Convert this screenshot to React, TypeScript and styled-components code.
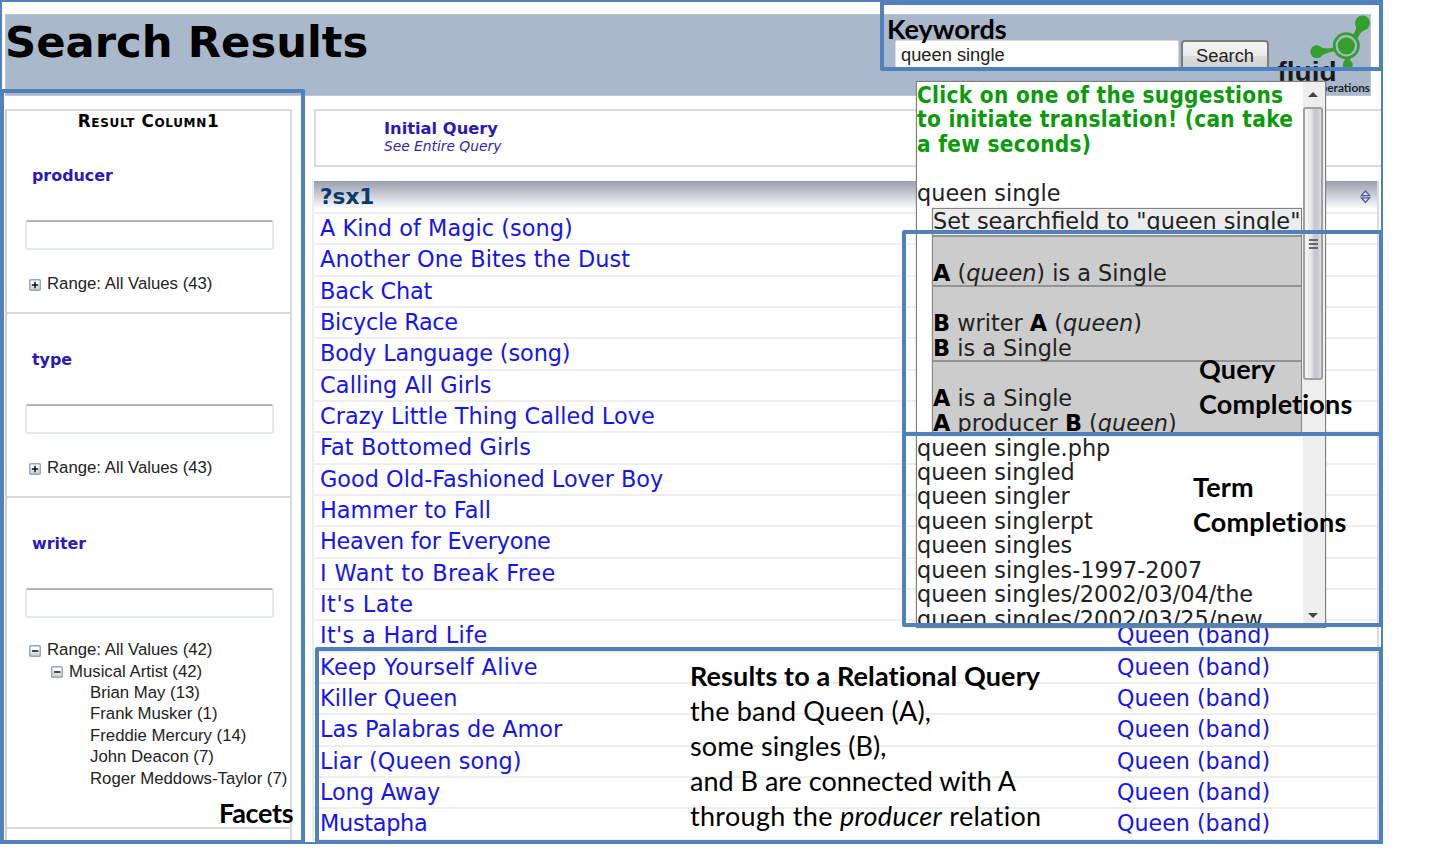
import React from 'react';
import styled, { createGlobalStyle } from 'styled-components';

const accent = '#4f81bd';
const verdana = '"DejaVu Sans", Verdana, sans-serif';
const arial = '"Liberation Sans", Arial, sans-serif';

const GlobalStyle = createGlobalStyle`
  * { box-sizing: border-box; }
  body { margin: 0; background: #fff; font-family: ${verdana}; color: #111; overflow: hidden; }
`;

const Shell = styled.div`
  position: relative;
  width: 1383px;
  height: 844px;
  border: 2px solid ${accent};
  padding: 12px 0 0 3px;
  overflow: hidden;
`;

const Banner = styled.header`
  display: flex;
  align-items: flex-start;
  width: 1366px;
  height: 82px;
  background: #a9b9cb;
  border: 1px solid #b9c6d4;
`;

const Title = styled.h1`
  flex: 1;
  margin: 0 0 0 -1px;
  font-size: 43.3px;
  line-height: 54px;
  font-weight: bold;
  color: #000;
  white-space: nowrap;
`;

const SearchForm = styled.form`
  display: flex;
  gap: 2px;
  padding-top: 25px;
`;

const SearchField = styled.div`
  width: 284px;
  height: 29px;
  padding-left: 5px;
  background: #fff;
  border: 1px solid #d5dce4;
  border-radius: 2px;
  font: 18.3px/27px ${arial};
  color: #222;
`;

const SearchButton = styled.button`
  width: 88px;
  height: 31px;
  padding: 0;
  border: 2px solid #7c7c7c;
  border-radius: 4px;
  background: linear-gradient(#f4f4f4, #ebebeb 50%, #dcdcdc 52%, #cfcfcf);
  font: 18.3px/27px ${arial};
  color: #222;
`;

const LogoSlot = styled.div`
  flex: none;
  width: 101px;
  height: 80px;
  svg { display: block; }
`;

const Columns = styled.div`
  display: flex;
  align-items: flex-start;
  padding-top: 13px;
`;

const Sidebar = styled.aside`
  flex: none;
  width: 287px;
  height: 760px;
  border: 2px solid #dadada;
  border-left-color: #cfcfcf;
`;

const SidebarTitle = styled.div`
  height: 19px;
  font-size: 16.8px;
  line-height: 21px;
  font-weight: bold;
  font-variant: small-caps;
  text-align: center;
  color: #000;
  letter-spacing: 0.65px;
`;

const FacetSection = styled.section<{ $height: number }>`
  height: ${p => p.$height}px;
  padding: 34px 0 0 18px;
  border-bottom: 2px solid #dadada;
`;

const FacetName = styled.h2`
  margin: 0 0 0 7px;
  font-size: 15.9px;
  line-height: 24px;
  font-weight: bold;
  color: #2a1ab8;
`;

const FacetInput = styled.div`
  width: 249px;
  height: 30px;
  margin-top: 32px;
  border: 2px solid #e3e9ef;
  border-top-color: #b4b5bb;
  border-radius: 3px;
`;

const Tree = styled.ul<{ $gap: number }>`
  list-style: none;
  margin: ${p => p.$gap}px 0 0 4px;
  padding: 0;
`;

const TreeRow = styled.li<{ $level: number }>`
  display: flex;
  align-items: center;
  gap: 6px;
  height: 21.4px;
  padding-left: ${p => [0, 22, 61][p.$level]}px;
  font: 16.75px/21px ${arial};
  color: #222;
  white-space: nowrap;
  svg { flex: none; margin-top: 2px; }
`;

const Main = styled.main`
  flex: none;
  width: 1068px;
  margin-left: 21px;
`;

const QueryPanel = styled.div`
  width: 1068px;
  height: 58px;
  margin-left: 1px;
  padding: 8px 0 0 68px;
  border: 2px solid #dadada;
  border-right: 0;
`;

const QueryTitle = styled.div`
  font-size: 16.3px;
  line-height: 20px;
  font-weight: bold;
  color: #2a1ab8;
`;

const QueryLink = styled.div`
  margin-top: -1px;
  font-size: 13.8px;
  line-height: 17px;
  font-style: italic;
  color: #3023b4;
`;

const ResultTable = styled.div`
  width: 1067px;
  margin: 14px 0 0 -1px;
  border: 2px solid #ececec;
  border-top-width: 0;
  border-right-color: #d9dbe0;
`;

const TableHead = styled.div`
  display: flex;
  align-items: center;
  justify-content: space-between;
  height: 31px;
  padding: 0 6px 0 6px;
  background: linear-gradient(#979eab, #bfc3cd 35%, #e6e8ec 70%, #fff 92%);
  font-size: 21.6px;
  font-weight: bold;
  color: #0d3a6e;
`;

const TableRow = styled.div`
  display: flex;
  height: 31.33px;
  padding-left: 6px;
  border-top: 2px solid #eeeeee;
  font-size: 22.4px;
  line-height: 29.5px;
  color: #1414f0;
  white-space: nowrap;
`;

const SongCell = styled.div<{ $spacing: number }>`
  flex: none;
  width: 797px;
  letter-spacing: ${p => p.$spacing}px;
`;

const BandCell = styled.div`
  flex: 1;
  font-size: 22.2px;
`;

const Suggestions = styled.div`
  position: absolute;
  left: 914px;
  top: 79px;
  display: flex;
  width: 410px;
  height: 547px;
  border: 1px solid #7f7f7f;
  box-shadow: 0 0 1px #888;
  background: #fff;
  overflow: hidden;
`;

const SuggestionBody = styled.div`
  flex: 1;
  min-width: 0;
  padding-top: 1px;
  font-size: 22.4px;
  line-height: 24.4px;
  white-space: nowrap;
  color: #222;
  b { color: #000; }
`;

const Hint = styled.div`
  height: 97.6px;
  font-family: "DejaVu Sans Condensed", "DejaVu Sans", sans-serif;
  font-stretch: condensed;
  font-size: 22.4px;
  letter-spacing: 0.31px;
  font-weight: bold;
  color: #0a9a0a;
`;

const CompletionGroup = styled.div`
  width: 370px;
  margin: 3px 0 -0.5px 15px;
  border: 1px solid #858585;
  box-shadow: 0 0 1px #999;
`;

const SetField = styled.div`
  height: 26px;
  background: #ececec;
`;

const Completion = styled.div<{ $height: number }>`
  display: flex;
  flex-direction: column;
  justify-content: flex-end;
  height: ${p => p.$height}px;
  border-top: 2px solid #939393;
  background: #ccc;
`;

const Term = styled.div`
  height: 24.45px;
`;

const ScrollTrack = styled.div`
  display: flex;
  flex-direction: column;
  align-items: center;
  flex: none;
  width: 22px;
  padding-right: 2px;
  background: #eeeeee;
`;

const ScrollArrow = styled.div<{ $down?: boolean }>`
  width: 0;
  height: 0;
  margin: ${p => (p.$down ? '233px 0 0' : '10px 0 10px')};
  border: 5px solid transparent;
  border-top: ${p => (p.$down ? '5px solid #444' : '0')};
  border-bottom: ${p => (p.$down ? '0' : '5px solid #444')};
`;

const ScrollThumb = styled.div`
  display: flex;
  flex-direction: column;
  align-items: center;
  justify-content: center;
  gap: 2px;
  width: 20px;
  height: 273px;
  border: 2px solid #a0a0a0;
  border-radius: 3px;
  background: linear-gradient(90deg, #f6f6f6, #e6e6e9 40%, #c6c6cc 60%, #c9c9ce 80%, #e2e2e2);
`;

const Grip = styled.span`
  width: 9px;
  height: 2px;
  background: #666;
`;

const Frame = styled.div<{ $x: number; $y: number; $w: number; $h: number }>`
  position: absolute;
  left: ${p => p.$x - 2}px;
  top: ${p => p.$y - 2}px;
  width: ${p => p.$w}px;
  height: ${p => p.$h}px;
  border: 4px solid ${accent};
  border-radius: 2px;
`;

const Note = styled.div<{ $x: number; $y: number; $spacing?: number }>`
  position: absolute;
  left: ${p => p.$x - 2}px;
  top: ${p => p.$y - 2}px;
  font: 27px/35px Lato, Calibri, sans-serif;
  font-variant-ligatures: none;
  letter-spacing: ${p => p.$spacing ?? 0}px;
  color: #000;
  white-space: nowrap;
`;

const NoteLine = styled.div<{ $spacing?: number }>`
  letter-spacing: ${p => p.$spacing ?? 0}px;
`;

const Toggle = ({ open }: { open?: boolean }) => (
  <svg width="12" height="12" viewBox="0 0 12 12">
    <defs>
      <linearGradient id="toggleFill" x1="0" y1="0" x2="0" y2="1">
        <stop offset="0.3" stopColor="#ffffff" />
        <stop offset="1" stopColor="#cfc8bb" />
      </linearGradient>
    </defs>
    <rect x="0.75" y="0.75" width="10.5" height="10.5" rx="1" fill="url(#toggleFill)" stroke="#8fa9c2" strokeWidth="1.5" />
    <path d={open ? 'M3 6h6.400' : 'M2.800 6h6.400M6 2.800v6.400'} stroke="#111" strokeWidth="1.500" />
  </svg>
);

const SortIcon = () => (
  <svg width="11" height="15" viewBox="0 0 11 15">
    <path d="M5.500 2L9.600 6.600H1.400Z M5.500 13.400L9.600 8.800H1.400Z" fill="#dfe4f2" stroke="#4a5b9c" strokeWidth="1.300" />
  </svg>
);

const Logo = () => (
  <svg width="101" height="80" viewBox="1269 15 101 80">
    <g fill="#359f2b">
      <path d="M1351 36Q1358 31 1356 22L1368 28Q1360 31 1357 40Z" />
      <path d="M1317 45.500Q1327 51 1336 46.500V51Q1327 51.500 1318 58Z" />
      <path d="M1344.500 57H1350Q1349.500 60 1352.500 64H1343Q1345.500 60 1344.500 57Z" />
      <circle cx="1362.500" cy="23" r="7.500" />
      <circle cx="1316.700" cy="51.700" r="6.400" />
      <circle cx="1347.800" cy="65" r="5" />
      <circle cx="1346.300" cy="45.800" r="8.600" />
    </g>
    <circle cx="1346.300" cy="45.800" r="12.100" fill="none" stroke="#359f2b" strokeWidth="2.800" />
    <text x="1277.500" y="80.800" fontFamily="Liberation Sans" fontWeight="bold" fontSize="28" fill="#1a1a1a">fluid</text>
    <text x="1370" y="92" textAnchor="end" fontFamily="Lato" fontWeight="bold" fontSize="11.800" fill="#222">operations</text>
  </svg>
);

const songs: { name: string; spacing?: number; band?: string }[] = [
  { name: 'A Kind of Magic (song)', spacing: 0.05 },
  { name: 'Another One Bites the Dust', spacing: 0.1 },
  { name: 'Back Chat', spacing: -0.2 },
  { name: 'Bicycle Race', spacing: -0.3 },
  { name: 'Body Language (song)', spacing: -0.1 },
  { name: 'Calling All Girls', spacing: 0.15 },
  { name: 'Crazy Little Thing Called Love', spacing: 0.05 },
  { name: 'Fat Bottomed Girls', spacing: 0.15 },
  { name: 'Good Old-Fashioned Lover Boy' },
  { name: 'Hammer to Fall' },
  { name: 'Heaven for Everyone', spacing: -0.28 },
  { name: 'I Want to Break Free', spacing: 0.43 },
  { name: "It's Late", spacing: 0.5 },
  { name: "It's a Hard Life", spacing: 0.33, band: 'Queen (band)' },
  { name: 'Keep Yourself Alive', spacing: 0.33, band: 'Queen (band)' },
  { name: 'Killer Queen', spacing: 0.05, band: 'Queen (band)' },
  { name: 'Las Palabras de Amor', band: 'Queen (band)' },
  { name: 'Liar (Queen song)', spacing: 0.05, band: 'Queen (band)' },
  { name: 'Long Away', spacing: -0.1, band: 'Queen (band)' },
  { name: 'Mustapha', spacing: -0.3, band: 'Queen (band)' },
];

const terms = [
  'queen single.php', 'queen singled', 'queen singler', 'queen singlerpt', 'queen singles',
  'queen singles-1997-2007', 'queen singles/2002/03/04/the', 'queen singles/2002/03/25/new',
];

const artists = ['Brian May (13)', 'Frank Musker (1)', 'Freddie Mercury (14)', 'John Deacon (7)', 'Roger Meddows-Taylor (7)'];

export default function App() {
  return (
    <>
      <GlobalStyle />
      <Shell>
        <Banner>
          <Title>Search Results</Title>
          <SearchForm>
            <SearchField>queen single</SearchField>
            <SearchButton type="button">Search</SearchButton>
          </SearchForm>
          <LogoSlot><Logo /></LogoSlot>
        </Banner>

        <Columns>
          <Sidebar>
            <SidebarTitle>Result Column1</SidebarTitle>
            {['producer', 'type'].map(name => (
              <FacetSection key={name} $height={184}>
                <FacetName>{name}</FacetName>
                <FacetInput />
                <Tree $gap={23}>
                  <TreeRow $level={0}><Toggle />Range: All Values (43)</TreeRow>
                </Tree>
              </FacetSection>
            ))}
            <FacetSection $height={331}>
              <FacetName>writer</FacetName>
              <FacetInput />
              <Tree $gap={21}>
                <TreeRow $level={0}><Toggle open />Range: All Values (42)</TreeRow>
                <TreeRow $level={1}><Toggle open />Musical Artist (42)</TreeRow>
                {artists.map(a => <TreeRow key={a} $level={2}>{a}</TreeRow>)}
              </Tree>
            </FacetSection>
          </Sidebar>

          <Main>
            <QueryPanel>
              <QueryTitle>Initial Query</QueryTitle>
              <QueryLink>See Entire Query</QueryLink>
            </QueryPanel>
            <ResultTable>
              <TableHead><span>?sx1</span><SortIcon /></TableHead>
              {songs.map(song => (
                <TableRow key={song.name}>
                  <SongCell $spacing={song.spacing ?? 0}>{song.name}</SongCell>
                  <BandCell>{song.band}</BandCell>
                </TableRow>
              ))}
            </ResultTable>
          </Main>
        </Columns>

        <Suggestions>
          <SuggestionBody>
            <Hint>
              Click on one of the suggestions<br />to initiate translation! (can take<br />a few seconds)
            </Hint>
            <Term>queen single</Term>
            <CompletionGroup>
              <SetField>Set searchfield to "queen single"</SetField>
              <Completion $height={50}>
                <div><b>A</b> (<i>queen</i>) is a Single</div>
              </Completion>
              <Completion $height={75}>
                <div><b>B</b> writer <b>A</b> (<i>queen</i>)</div>
                <div><b>B</b> is a Single</div>
              </Completion>
              <Completion $height={75}>
                <div><b>A</b> is a Single</div>
                <div><b>A</b> producer <b>B</b> (<i>queen</i>)</div>
              </Completion>
            </CompletionGroup>
            {terms.map(t => <Term key={t}>{t}</Term>)}
          </SuggestionBody>
          <ScrollTrack>
            <ScrollArrow />
            <ScrollThumb><Grip /><Grip /><Grip /></ScrollThumb>
            <ScrollArrow $down />
          </ScrollTrack>
        </Suggestions>

        <Frame $x={0} $y={89} $w={305} $h={755} />
        <Frame $x={880} $y={1} $w={503} $h={70} />
        <Frame $x={902} $y={230} $w={481} $h={206} />
        <Frame $x={902} $y={432} $w={481} $h={195} />
        <Frame $x={315} $y={647} $w={1068} $h={197} />

        <Note $x={887} $y={11}><b>Keywords</b></Note>
        <Note $x={1199} $y={351} $spacing={0.18}><b>Query<br />Completions</b></Note>
        <Note $x={1193} $y={469} $spacing={0.18}><b>Term<br />Completions</b></Note>
        <Note $x={219} $y={795} $spacing={-0.3}><b>Facets</b></Note>
        <Note $x={690} $y={658}>
          <NoteLine $spacing={0.12}><b>Results to a Relational Query</b></NoteLine>
          <NoteLine $spacing={0.2}>the band Queen (A),</NoteLine>
          <NoteLine $spacing={0.1}>some singles (B),</NoteLine>
          <NoteLine>and B are connected with A</NoteLine>
          <NoteLine $spacing={0.3}>through the <i>producer</i> relation</NoteLine>
        </Note>
      </Shell>
    </>
  );
}
